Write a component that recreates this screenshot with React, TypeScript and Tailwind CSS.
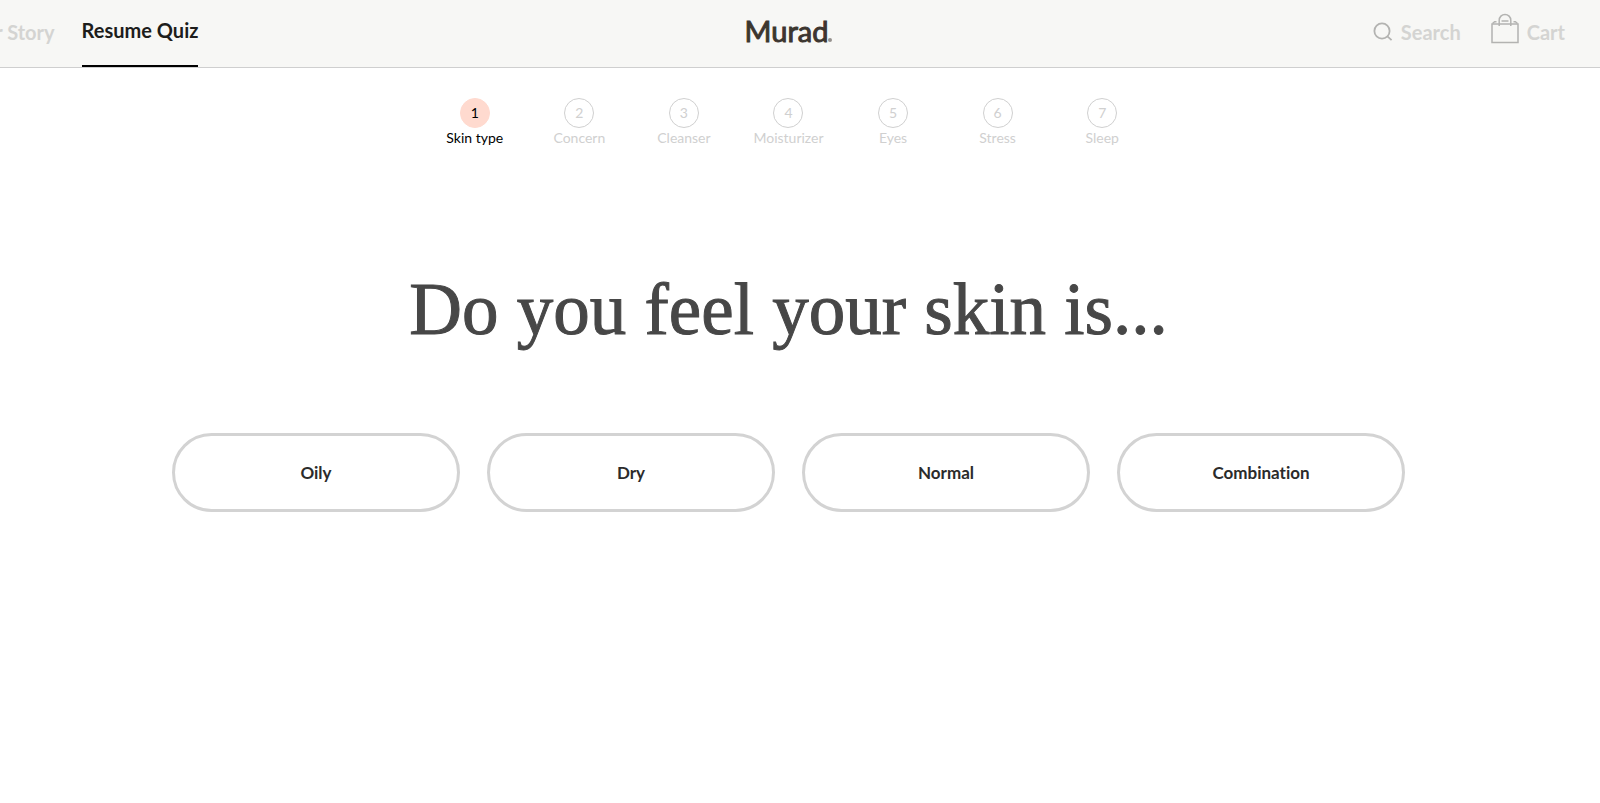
import React from 'react'

const steps = ['Skin type', 'Concern', 'Cleanser', 'Moisturizer', 'Eyes', 'Stress', 'Sleep']
const answers = ['Oily', 'Dry', 'Normal', 'Combination']

function SearchIcon() {
  return (
    <svg className="w-5 h-5" viewBox="0 0 20 20" fill="none" stroke="#b3b3b1" strokeWidth="1.8" aria-hidden="true">
      <circle cx="9" cy="9" r="7.6" />
      <path d="M14.4 14.4 L18.6 18.2" />
    </svg>
  )
}

function CartIcon() {
  return (
    <svg className="w-7 h-[31px]" viewBox="0 0 28 31" fill="none" stroke="#b3b3b1" strokeWidth="1.5" aria-hidden="true">
      <path d="M1 11 H27 V29.5 H1 Z" />
      <path d="M1.5 10.5 L3.6 8.7 H5.5 M26.5 10.5 L24.4 8.7 H22.5" />
      <path d="M8.2 13 V7.2 A5.8 5.8 0 0 1 19.8 7.2 V13" />
      <path d="M10.5 8 H17.5" />
    </svg>
  )
}

export default function QuizPage() {
  return (
    <div className="min-h-screen overflow-x-hidden bg-white font-['Lato',sans-serif] [font-variant-ligatures:none]">
      <header className="grid grid-cols-[1fr_auto_1fr] h-[68px] pr-[23px] bg-[#f7f7f5] border-b border-[#cfcfcf]">
        <nav className="flex gap-[27px] -ml-[32px] text-xl font-bold whitespace-nowrap">
          <a href="#story" className="pt-[18px] text-[#d4d4d2]">Our Story</a>
          <a href="#quiz" className="pt-4 text-[#1d1d1b] border-b-2 border-black">Resume Quiz</a>
        </nav>

        <a
          href="#home"
          className="flex items-baseline pt-[11px] text-[29px] leading-10 text-[#3c352f] [-webkit-text-stroke:1px_#3c352f]"
        >
          Murad
          <span className="w-1 h-1 rounded-full bg-[#96928e]" />
        </a>

        <div className="flex justify-end pr-3 text-xl font-bold text-[#d4d4d2]">
          <button className="flex items-center gap-2 h-16 mr-[30px]">
            <SearchIcon />
            Search
          </button>
          <a href="#cart" className="flex items-center gap-2 h-16">
            <span className="pb-2"><CartIcon /></span>
            Cart
          </a>
        </div>
      </header>

      <main className="flex flex-col items-center pr-[23px]">
        {/* Progress */}
        <ol className="grid grid-cols-7 w-full max-w-[732px] pt-[30px]">
          {steps.map((step, i) => (
            <li
              key={step}
              className={`flex flex-col items-center text-sm leading-5 ${i === 0 ? 'text-black' : 'text-[#d0d0d0]'}`}
            >
              <span
                className={`flex items-center justify-center w-[30px] h-[30px] rounded-full border ${i === 0 ? 'bg-[#ffdacf] border-[#ffdacf]' : 'border-[#d0d0d0]'}`}
              >
                {i + 1}
              </span>
              {step}
            </li>
          ))}
        </ol>

        <h1 className="mt-[118px] text-center text-[73px] leading-[88px] text-[#474747] font-['Liberation_Serif',serif] [-webkit-text-stroke:1px_#474747]">
          Do you feel your skin is...
        </h1>

        {/* Answers */}
        <div className="grid grid-cols-4 gap-[27px] w-full max-w-[1233px] mt-[79px]">
          {answers.map((answer) => (
            <button
              key={answer}
              className="h-[79px] rounded-full border-3 border-[#d3d3d3] text-[17px] font-bold text-[#2b2b2b]"
            >
              {answer}
            </button>
          ))}
        </div>
      </main>
    </div>
  )
}
